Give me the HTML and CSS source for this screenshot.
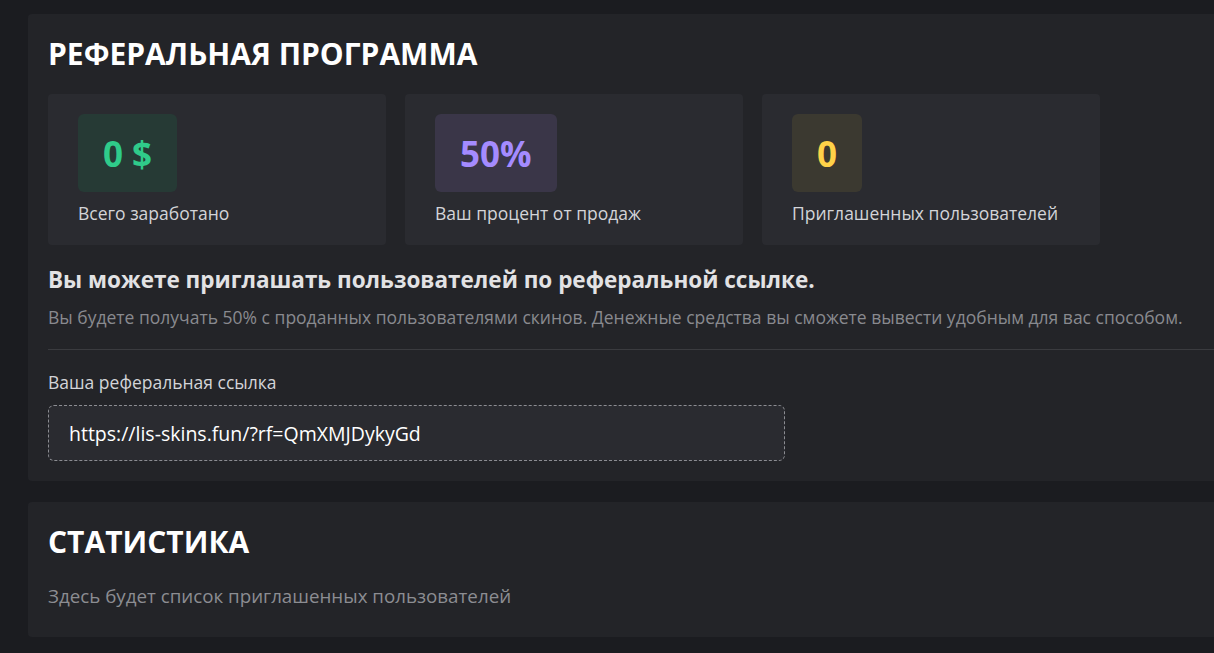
FILE: index.html
```html
<!doctype html>
<html lang="ru">
  <head>
    <meta charset="UTF-8" />
    <meta name="viewport" content="width=device-width, initial-scale=1.0" />
    <title>Реферальная программа</title>
    <link rel="stylesheet" href="styles.css">
  </head>
  <body>
    <div class="content">
      <section class="panel">
        <h1>РЕФЕРАЛЬНАЯ ПРОГРАММА</h1>

        <div class="stats">
          <div class="stat-card">
            <div class="stat-value green">0 $</div>
            <div class="stat-label">Всего заработано</div>
          </div>
          <div class="stat-card">
            <div class="stat-value purple">50%</div>
            <div class="stat-label">Ваш процент от продаж</div>
          </div>
          <div class="stat-card">
            <div class="stat-value yellow">0</div>
            <div class="stat-label">Приглашенных пользователей</div>
          </div>
        </div>

        <h3>Вы можете приглашать пользователей по реферальной ссылке.</h3>
        <p class="muted">Вы будете получать 50% с проданных пользователями скинов. Денежные средства вы сможете вывести удобным для вас способом.</p>

        <hr />

        <label for="refLink">Ваша реферальная ссылка</label>
        <input type="text" id="refLink" value="https://lis-skins.fun/?rf=QmXMJDykyGd" readonly />
      </section>

      <section class="panel panel-stats">
        <h1>СТАТИСТИКА</h1>
        <p class="muted">Здесь будет список приглашенных пользователей</p>
      </section>
    </div>
  </body>
</html>
```

FILE: styles.css
```css
body {
  font-family: "Open Sans", Arial, sans-serif;
  margin: 0;
  background-color: #1b1c20;
  color: #e6e6e8;
  overflow: hidden;
}
.content {
  width: 1220px;
  margin: 14px 0 0 28px;
  display: flex;
  flex-direction: column;
  gap: 21px;
}
.panel {
  background-color: #232428;
  border-radius: 4px;
  padding: 20px;
}
h1 {
  margin: 0;
  font-size: 30px;
  line-height: 40px;
  font-weight: 700;
  color: #ffffff;
}
.stats {
  display: flex;
  gap: 19px;
  margin-top: 20px;
}
.stat-card {
  width: 338px;
  box-sizing: border-box;
  padding: 20px 30px 19px;
  background-color: #2a2b30;
  border-radius: 4px;
}
.stat-value {
  display: inline-flex;
  align-items: center;
  height: 78px;
  padding: 0 25px;
  border-radius: 6px;
  font-size: 35px;
  font-weight: 700;
}
.green {
  color: #2fcb8a;
  background-color: #263a35;
}
.purple {
  color: #a48bff;
  background-color: #3a3648;
}
.yellow {
  color: #ffd248;
  background-color: #3b3930;
}
.stat-label {
  margin-top: 8px;
  font-size: 17.5px;
  line-height: 26px;
  color: #d3d4d8;
}
h3 {
  margin: 20px 0 0;
  font-size: 22.5px;
  line-height: 30px;
  font-weight: 700;
  color: #e2e2e4;
}
.muted {
  margin: 9px 0 0;
  font-size: 17.5px;
  line-height: 26px;
  color: #898a8f;
}
hr {
  border: none;
  border-top: 1px solid #3a3b3f;
  margin: 19px 0 0;
}
label {
  display: block;
  margin-top: 19px;
  font-size: 17.5px;
  line-height: 26px;
  color: #d3d4d8;
}
input {
  display: block;
  width: 737px;
  height: 56px;
  margin-top: 10px;
  box-sizing: border-box;
  padding: 0 20px;
  border: 1px dashed #8c8d92;
  border-radius: 6px;
  background-color: #2a2b30;
  color: #ffffff;
  font-family: "Open Sans", Arial, sans-serif;
  font-size: 19.5px;
  outline: none;
}
.panel-stats {
  padding-bottom: 28px;
}
.panel-stats .muted {
  margin-top: 21px;
  font-size: 18.75px;
  color: #8c8d92;
}
```
